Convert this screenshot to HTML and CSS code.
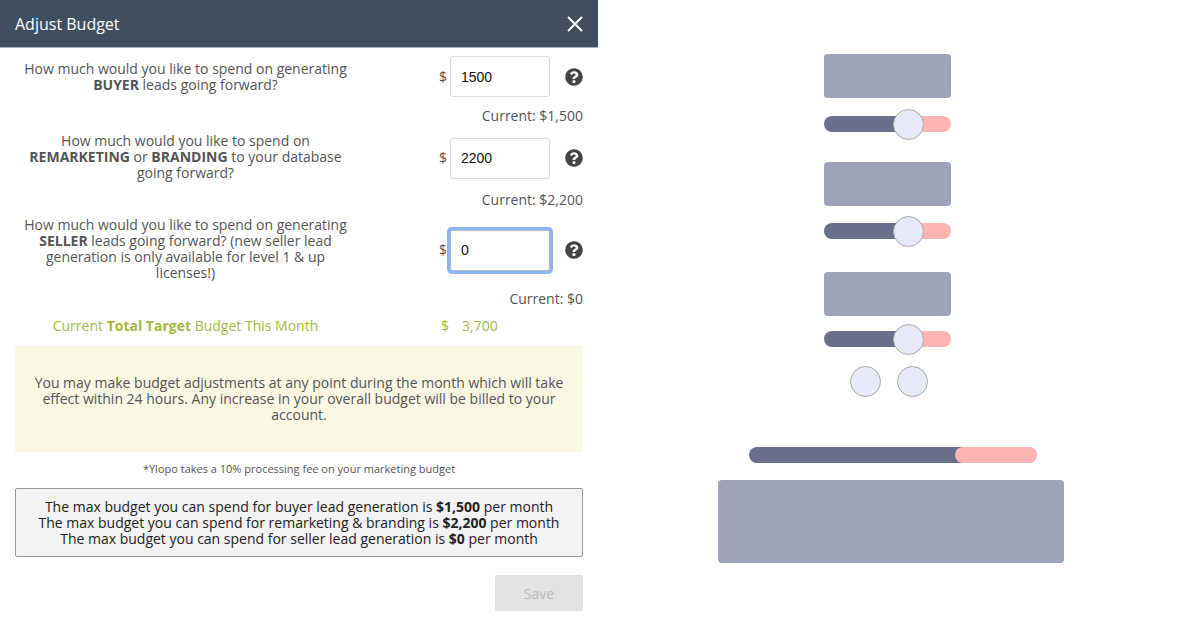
FILE: index.html
```html
<!DOCTYPE html>
<html lang="en">
<head>
  <meta charset="UTF-8" />
  <title>Adjust Budget</title>
  <meta name="viewport" content="width=device-width, initial-scale=1.0" />
  <link rel="stylesheet" href="styles.css">
</head>
<body>
  <section class="modal">
    <header class="modal-head">
      <h1>Adjust Budget</h1>
      <svg class="close" viewBox="0 0 16 16" width="16" height="16"><path d="M1 1l14 14M15 1L1 15" /></svg>
    </header>

    <div class="modal-body">
      <div class="row row-first">
        <p class="question">How much would you like to spend on generating <b>BUYER</b> leads going forward?</p>
        <span class="dollar">$</span>
        <input class="amount" type="text" value="1500" />
        <svg class="help" viewBox="0 0 512 512" width="18" height="18"><path d="M504 256c0 136.997-111.043 248-248 248S8 392.997 8 256C8 119.083 119.043 8 256 8s248 111.083 248 248zM262.655 90c-54.497 0-89.255 22.957-116.549 63.758-3.536 5.286-2.353 12.415 2.715 16.258l34.699 26.31c5.205 3.947 12.621 3.008 16.665-2.122 17.864-22.658 30.113-35.797 57.303-35.797 20.429 0 45.698 13.148 45.698 32.958 0 14.976-12.363 22.667-32.534 33.976C247.128 238.528 216 254.941 216 296v4c0 6.627 5.373 12 12 12h56c6.627 0 12-5.373 12-12v-1.333c0-28.462 83.186-29.647 83.186-106.667 0-58.002-60.165-102-116.531-102zM256 338c-25.365 0-46 20.635-46 46 0 25.364 20.635 46 46 46s46-20.636 46-46c0-25.365-20.635-46-46-46z" /></svg>
      </div>
      <div class="current current-first">Current: $1,500</div>

      <div class="row">
        <p class="question">How much would you like to spend on <b>REMARKETING</b> or <b>BRANDING</b> to your database going forward?</p>
        <span class="dollar">$</span>
        <input class="amount" type="text" value="2200" />
        <svg class="help" viewBox="0 0 512 512" width="18" height="18"><path d="M504 256c0 136.997-111.043 248-248 248S8 392.997 8 256C8 119.083 119.043 8 256 8s248 111.083 248 248zM262.655 90c-54.497 0-89.255 22.957-116.549 63.758-3.536 5.286-2.353 12.415 2.715 16.258l34.699 26.31c5.205 3.947 12.621 3.008 16.665-2.122 17.864-22.658 30.113-35.797 57.303-35.797 20.429 0 45.698 13.148 45.698 32.958 0 14.976-12.363 22.667-32.534 33.976C247.128 238.528 216 254.941 216 296v4c0 6.627 5.373 12 12 12h56c6.627 0 12-5.373 12-12v-1.333c0-28.462 83.186-29.647 83.186-106.667 0-58.002-60.165-102-116.531-102zM256 338c-25.365 0-46 20.635-46 46 0 25.364 20.635 46 46 46s46-20.636 46-46c0-25.365-20.635-46-46-46z" /></svg>
      </div>
      <div class="current">Current: $2,200</div>

      <div class="row">
        <p class="question">How much would you like to spend on generating <b>SELLER</b> leads going forward? (new seller lead generation is only available for level 1 &amp; up licenses!)</p>
        <span class="dollar">$</span>
        <input class="amount amount-focus" type="text" value="0" />
        <svg class="help" viewBox="0 0 512 512" width="18" height="18"><path d="M504 256c0 136.997-111.043 248-248 248S8 392.997 8 256C8 119.083 119.043 8 256 8s248 111.083 248 248zM262.655 90c-54.497 0-89.255 22.957-116.549 63.758-3.536 5.286-2.353 12.415 2.715 16.258l34.699 26.31c5.205 3.947 12.621 3.008 16.665-2.122 17.864-22.658 30.113-35.797 57.303-35.797 20.429 0 45.698 13.148 45.698 32.958 0 14.976-12.363 22.667-32.534 33.976C247.128 238.528 216 254.941 216 296v4c0 6.627 5.373 12 12 12h56c6.627 0 12-5.373 12-12v-1.333c0-28.462 83.186-29.647 83.186-106.667 0-58.002-60.165-102-116.531-102zM256 338c-25.365 0-46 20.635-46 46 0 25.364 20.635 46 46 46s46-20.636 46-46c0-25.365-20.635-46-46-46z" /></svg>
      </div>
      <div class="current current-last">Current: $0</div>

      <div class="total">
        <p class="total-label">Current <b>Total Target</b> Budget This Month</p>
        <span class="total-dollar">$</span>
        <span class="total-value">3,700</span>
      </div>

      <div class="notice">You may make budget adjustments at any point during the month which will take effect within 24 hours. Any increase in your overall budget will be billed to your account.</div>

      <p class="fee">*Ylopo takes a 10% processing fee on your marketing budget</p>

      <div class="limits">
        The max budget you can spend for buyer lead generation is <b>$1,500</b> per month<br>
        The max budget you can spend for remarketing &amp; branding is <b>$2,200</b> per month<br>
        The max budget you can spend for seller lead generation is <b>$0</b> per month
      </div>

      <div class="actions">
        <button class="save" type="button" disabled>Save</button>
      </div>
    </div>
  </section>

  <!-- skeleton side, still loading -->
  <aside class="skeleton">
    <div class="block"></div>
    <div class="slider"><span class="knob"></span></div>
    <div class="block block-2"></div>
    <div class="slider slider-2"><span class="knob"></span></div>
    <div class="block block-3"></div>
    <div class="slider slider-3"><span class="knob"></span></div>
    <div class="dots"><span class="dot"></span><span class="dot"></span></div>
    <div class="progress"><span class="progress-fill"></span></div>
    <div class="block-wide"></div>
  </aside>
</body>
</html>
```

FILE: styles.css
```css
* {
  box-sizing: border-box;
}
body {
  margin: 0;
  height: 618px;
  overflow: hidden;
  display: flex;
  background: #fff;
  color: #555;
  font-family: 'Open Sans', 'Liberation Sans', sans-serif;
  font-size: 14px;
  line-height: 16px;
}
p {
  margin: 0;
}

/* left side */
.modal {
  width: 598px;
  flex: none;
}
.modal-head {
  height: 48px;
  padding: 0 15px;
  display: flex;
  align-items: center;
  justify-content: space-between;
  background: #3f4f5f;
  border-bottom: 1px solid #a9b2ba;
}
.modal-head h1 {
  margin: 0;
  font-size: 16px;
  font-weight: 400;
  color: #fff;
}
.close {
  fill: none;
  stroke: #fff;
  stroke-width: 2;
}
.modal-body {
  padding: 0 15px;
}
.row {
  display: flex;
  align-items: center;
  margin-top: 7px;
}
.row-first {
  margin-top: 8px;
}
.question {
  width: 341px;
  margin-right: 1px;
  margin-bottom: 2px;
  flex: none;
  text-align: center;
}
.row-first .question {
  margin-bottom: 0;
}
.dollar {
  width: 93px;
  padding-right: 3px;
  text-align: right;
}
.amount {
  width: 100px;
  height: 41px;
  padding: 0 10px;
  border: 1px solid #ddd;
  border-radius: 3px;
  background: #fff;
  color: #111;
  font-family: 'Liberation Sans', sans-serif;
  font-size: 14px;
  outline: none;
}
.amount-focus {
  border-color: #bbb;
  box-shadow: 0 0 0 3px #8ab4f8;
  border-radius: 2px;
}
.help {
  margin-left: 15px;
  fill: #444;
}
.current {
  margin-top: 7px;
  text-align: right;
  line-height: 20px;
}
.current-first {
  margin-top: 9px;
}
.current-last {
  margin-top: 6px;
}
.total {
  display: flex;
  margin-top: 7px;
  line-height: 20px;
  color: #a5b83f;
}
.total-label {
  width: 341px;
  margin-right: 1px;
  flex: none;
  text-align: center;
}
.total-dollar {
  width: 92px;
  text-align: right;
}
.total-value {
  margin-left: 13px;
}
.notice {
  height: 106px;
  margin-top: 10px;
  padding: 0 15px;
  display: flex;
  align-items: center;
  text-align: center;
  background: #faf8e3;
}
.fee {
  margin-top: 9px;
  text-align: center;
  font-size: 11px;
}
.limits {
  height: 69px;
  margin-top: 11px;
  padding-top: 10px;
  text-align: center;
  color: #222;
  background: #f3f3f3;
  border: 1px solid #999;
  border-radius: 2px;
}
.actions {
  display: flex;
  justify-content: flex-end;
  margin-top: 18px;
}
.save {
  width: 88px;
  height: 36px;
  padding: 0;
  border: none;
  border-radius: 2px;
  background: #e3e3e3;
  color: #bbb;
  font-family: inherit;
  font-size: 14px;
}

/* right side */
.skeleton {
  flex: 1;
  display: flex;
  flex-direction: column;
  align-items: center;
  padding-top: 54px;
  padding-right: 3px;
}
.block {
  width: 127px;
  height: 44px;
  background: #9ea3b8;
  border-radius: 4px;
}
.block-2 {
  margin-top: 30px;
}
.block-3 {
  margin-top: 33px;
}
.slider {
  position: relative;
  width: 127px;
  height: 16px;
  margin-top: 18px;
  border-radius: 8px;
  background: linear-gradient(to right, #696f8a 75%, #ffb4b4 75%);
}
.slider-2 {
  margin-top: 17px;
}
.slider-3 {
  margin-top: 15px;
}
.knob {
  position: absolute;
  left: 69px;
  top: -7px;
  width: 31px;
  height: 31px;
  border-radius: 50%;
  background: #e6e9f7;
  border: 1px solid #aaa;
}
.dots {
  display: flex;
  gap: 16px;
  margin-top: 19px;
  margin-left: 2px;
}
.dot {
  width: 31px;
  height: 31px;
  border-radius: 50%;
  background: #e6e9f7;
  border: 1px solid #aaa;
}
.progress {
  position: relative;
  width: 288px;
  height: 16px;
  margin-top: 50px;
  margin-left: 11px;
  border-radius: 8px;
  background: linear-gradient(to right, #696f8a 80%, #ffb4b4 80%);
}
.progress-fill {
  position: absolute;
  left: 206px;
  top: 0;
  width: 82px;
  height: 16px;
  border-radius: 8px;
  background: #ffb4b4;
}
.block-wide {
  width: 346px;
  height: 83px;
  margin-top: 17px;
  margin-left: 7px;
  border-radius: 4px;
  background: #9ea3b8;
  flex: none;
}
```
